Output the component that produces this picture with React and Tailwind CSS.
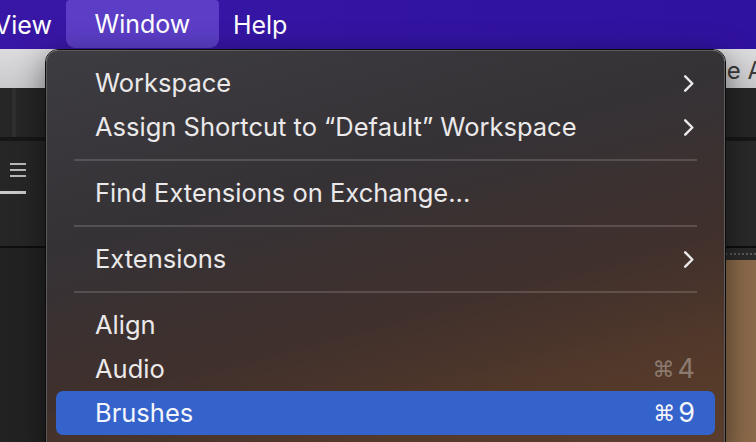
import React from 'react'

const FONT = { fontFamily: 'Inter, "Noto Sans", "DejaVu Sans", sans-serif' }

function Chevron() {
  return (
    <svg viewBox="0 0 12 20" className="h-[19px] w-[12px]" fill="none" aria-hidden>
      <path
        d="M2 2.5l7.5 7.5L2 17.5"
        stroke="currentColor"
        strokeWidth="2.6"
        strokeLinecap="round"
        strokeLinejoin="round"
      />
    </svg>
  )
}

function Item({ label, submenu, shortcut, active }) {
  return (
    <div
      className={`flex h-[44px] items-center justify-between rounded-[7px] pl-[39px] pr-[20px] ${
        active ? 'bg-[#3463cb] text-[#f4f6fb]' : 'text-[#ebe9ea]'
      }`}
    >
      <span>{label}</span>
      {submenu && <Chevron />}
      {shortcut && (
        <span
          className={`flex items-center gap-[3px] text-[27px] ${
            active ? 'text-[#f4f6fb]' : 'text-[#8c7a70]'
          }`}
        >
          <span style={{ fontFamily: '"DejaVu Sans", sans-serif' }} className="text-[22px]">
            ⌘
          </span>
          <span>{shortcut}</span>
        </span>
      )}
    </div>
  )
}

function Separator() {
  return (
    <div className="flex h-[22px] items-center px-[18px]">
      <div className="h-[2px] w-full bg-[#ffffff]/15" />
    </div>
  )
}

function BackdropLeft() {
  return (
    <div className="flex w-[46px] flex-col">
      <div className="flex h-[49px] bg-[#262626]">
        <div className="ml-[12px] w-[4px] bg-[#2f2f2f]" />
      </div>
      <div className="h-[4px] bg-[#171717]" />
      <div className="h-[105px] bg-[#262626]">
        <div className="flex flex-col gap-[4px] pl-[10px] pt-[22px]">
          <div className="h-[2px] w-[16px] bg-[#b9b9b9]" />
          <div className="h-[2px] w-[16px] bg-[#b9b9b9]" />
          <div className="h-[2px] w-[16px] bg-[#b9b9b9]" />
        </div>
        <div className="mt-[14px] h-[3px] w-[26px] bg-[#c9c9c9]" />
      </div>
      <div className="h-[2px] bg-[#0e0e0e]" />
      <div className="flex-1 bg-[#222222]" />
    </div>
  )
}

function BackdropRight() {
  return (
    <div className="flex w-[31px] flex-col">
      <div className="h-[49px] bg-[#262626]" />
      <div className="h-[4px] bg-[#171717]" />
      <div className="h-[105px] bg-[#292929]" />
      <div className="h-[2px] bg-[#0e0e0e]" />
      <div className="flex h-[12px] items-center bg-[#2a2a2a]">
        <div className="h-[2px] w-full border-t-2 border-dotted border-[#5a5a5a]" />
      </div>
      <div className="flex-1 bg-[#8b6a4a]" />
    </div>
  )
}

export default function App() {
  return (
    <div className="relative h-[442px] w-[756px] overflow-hidden bg-[#222]" style={FONT}>
      <div className="flex h-[49px] items-center bg-[linear-gradient(90deg,#3917a6,#3314a2_50%,#3012a0)] text-[25px] text-white">
        <span className="-ml-[6px] pr-[14px] pt-[2px]">View</span>
        <div className="flex h-[48px] w-[153px] items-center justify-center self-start rounded-b-[9px] rounded-t-[4px] bg-[#5b3dc6] pt-[2px]">
          Window
        </div>
        <span className="ml-[14px] pt-[2px]">Help</span>
      </div>

      <div className="flex h-[39px] justify-end bg-[linear-gradient(180deg,#dcdcde,#c9c9cb)]">
        <span className="-mr-[8px] mt-[4px] text-[24px] text-[#3a3a3a]">e A</span>
      </div>

      <div className="flex h-[354px] justify-between">
        <BackdropLeft />
        <BackdropRight />
      </div>

      <div className="absolute left-[45px] top-[49px] w-[681px] rounded-t-[13px] border border-[#0d0d0d] shadow-[0_8px_30px_rgba(0,0,0,0.5)]">
        <div className="h-[400px] rounded-t-[12px] border border-[#5c5a5c] bg-[linear-gradient(165deg,#3d3c40_0%,#353236_35%,#40302c_62%,#553a2a_85%,#5a3d2c_100%)] px-[9px] pt-[10px] text-[25.5px]">
          <Item label="Workspace" submenu />
          <Item label="Assign Shortcut to “Default” Workspace" submenu />
          <Separator />
          <Item label="Find Extensions on Exchange..." />
          <Separator />
          <Item label="Extensions" submenu />
          <Separator />
          <Item label="Align" />
          <Item label="Audio" shortcut="4" />
          <Item label="Brushes" shortcut="9" active />
        </div>
      </div>
    </div>
  )
}
